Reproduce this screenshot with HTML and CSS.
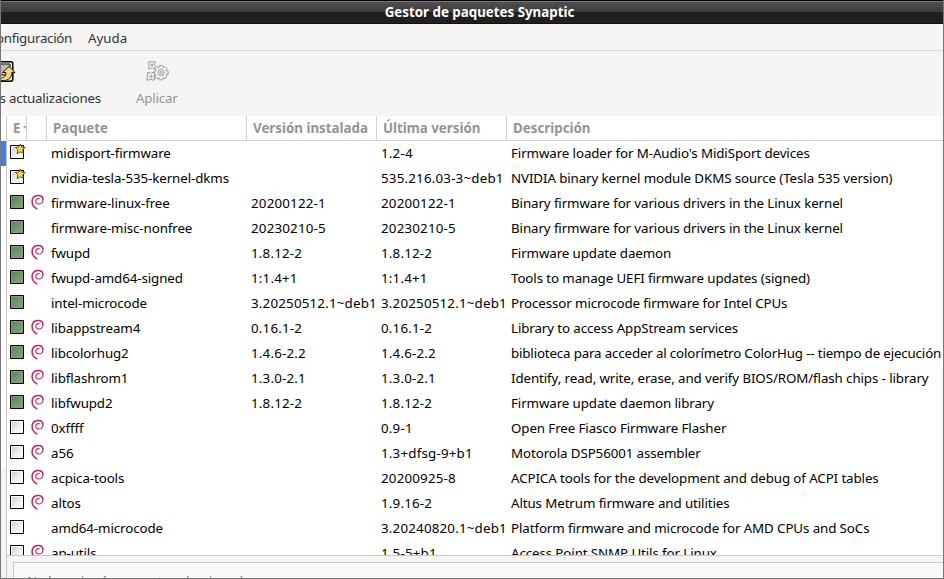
FILE: index.html
```html
<!DOCTYPE html>
<html lang="es">
<head>
<meta charset="utf-8">
<title>Gestor de paquetes Synaptic</title>
<link rel="stylesheet" href="styles.css">
</head>
<body>
<svg class="defs" width="0" height="0">
  <defs>
    <linearGradient id="pale" x1="0" y1="0" x2="1" y2="1"><stop offset="0" stop-color="#cfcfcf"/><stop offset=".6" stop-color="#f0f0f0"/><stop offset="1" stop-color="#fff"/></linearGradient>
    <linearGradient id="moss" x1="0" y1="0" x2="1" y2="1"><stop offset="0" stop-color="#5f835b"/><stop offset="1" stop-color="#84a480"/></linearGradient>
  </defs>
  <symbol id="box" viewBox="0 0 16 16"><path d="M.5 2.5h13v13H.5z" fill="#fff" stroke="#000"/><path d="M2 4h10v10H2z" fill="url(#pale)"/></symbol>
  <symbol id="full" viewBox="0 0 16 16"><path d="M.5 2.5h13v13H.5z" fill="#80a07b" stroke="#000"/><path d="M2 4h10v10H2z" fill="url(#moss)"/></symbol>
  <symbol id="new" viewBox="0 0 16 16"><path d="M.5 2.5h13v13H.5z" fill="#fff" stroke="#000"/><path d="M2 4h10v10H2z" fill="url(#pale)"/><path d="M10.300 1l1.400 3 3.500.4-2.500 2.500.8 3.700-3.200-1.800-3.200 1.800.8-3.700L5.400 4.400l3.500-.4z" fill="#f6d852" stroke="#3b320c" stroke-width=".8"/></symbol>
  <symbol id="swirl" viewBox="0 0 13 16"><g fill="none" stroke="#c4245a" stroke-linecap="round"><path d="M5.800 14.800C2.800 13 .9 10.400 1.100 7.400 1.300 3.900 3.600 1.700 6.600 1.500c2.900-.2 5 1.200 5.300 3.500" stroke-width="1.500"/><path d="M11.900 5c.3 2.800-1.200 4.900-3.700 5C6 10.100 4.600 8.600 4.800 7c.2-1.700 1.600-2.700 3.500-2.200" stroke-width="1.100"/></g></symbol>
</svg>
<div class="window">
  <header class="titlebar">Gestor de paquetes Synaptic</header>
  <nav class="menubar"><span class="cut">Configuración</span><span>Ayuda</span></nav>
  <div class="toolbar">
    <div class="tool upgrade">
      <svg width="24" height="24" viewBox="0 0 24 24"><rect x="2" y="1.800" width="18.800" height="19.400" rx="2" fill="#ececec" stroke="#000" stroke-width="1.500"/><path d="M4 4h14v11H4z" fill="#bdbdbd" stroke="#111"/><path d="M7 17.500c4 1.500 7-1 7-5h-3.500l6.500-6 6.200 6h-3.400c0 6-5 9.500-12 7.500z" fill="#f3d778" stroke="#282006"/></svg>
      <span>Marcar todas las actualizaciones</span>
    </div>
    <div class="tool apply">
      <svg width="24" height="24" viewBox="0 0 24 24"><g fill="#eeeeed" stroke="#9c9c9a" stroke-width="1"><path d="M14.500 5.500h3l.5 2 2-.8 2 2-.8 2 2 .5v3l-2 .5.800 2-2 2-2-.8-.5 2h-3l-.5-2-2 .8-2-2 .8-2-2-.5v-3l2-.5-.8-2 2-2 2 .8z"/><path d="M4 1.500h2l1 1 1-1h2v2l-1 1 1 1v3H8l-1-1-1 1H3.500V6.500l1-1-1-1z"/><path d="M2.500 12.500H5l1 1 1-1h2.500v2.500l-1 1 1 1v3H7l-1-1-1 1H2v-3l1-1-1-1z"/><circle cx="16" cy="12.500" r="3"/><circle cx="16" cy="12.500" r="1"/><circle cx="7" cy="5" r="1"/><circle cx="6" cy="16.500" r="1"/></g></svg>
      <span>Aplicar</span>
    </div>
  </div>
  <main class="content">
    <aside class="filters"><div class="picked"></div><div class="rest"></div></aside>
    <section class="packages">
      <div class="row head"><span class="sort">E<i></i></span><span></span><span>Paquete</span><span>Versión instalada</span><span>Última versión</span><span>Descripción</span></div>
      <div class="list">
        <div class="row"><svg class="state"><use href="#new"/></svg><b></b><span>midisport-firmware</span><span class="ver"></span><span class="ver">1.2-4</span><span>Firmware loader for M-Audio's MidiSport devices</span></div>
        <div class="row"><svg class="state"><use href="#new"/></svg><b></b><span>nvidia-tesla-535-kernel-dkms</span><span class="ver"></span><span class="ver">535.216.03-3~deb1</span><span>NVIDIA binary kernel module DKMS source (Tesla 535 version)</span></div>
        <div class="row"><svg class="state"><use href="#full"/></svg><svg class="deb"><use href="#swirl"/></svg><span>firmware-linux-free</span><span class="ver">20200122-1</span><span class="ver">20200122-1</span><span>Binary firmware for various drivers in the Linux kernel</span></div>
        <div class="row"><svg class="state"><use href="#full"/></svg><b></b><span>firmware-misc-nonfree</span><span class="ver">20230210-5</span><span class="ver">20230210-5</span><span>Binary firmware for various drivers in the Linux kernel</span></div>
        <div class="row"><svg class="state"><use href="#full"/></svg><svg class="deb"><use href="#swirl"/></svg><span>fwupd</span><span class="ver">1.8.12-2</span><span class="ver">1.8.12-2</span><span>Firmware update daemon</span></div>
        <div class="row"><svg class="state"><use href="#full"/></svg><svg class="deb"><use href="#swirl"/></svg><span>fwupd-amd64-signed</span><span class="ver">1:1.4+1</span><span class="ver">1:1.4+1</span><span>Tools to manage UEFI firmware updates (signed)</span></div>
        <div class="row"><svg class="state"><use href="#full"/></svg><b></b><span>intel-microcode</span><span class="ver">3.20250512.1~deb1</span><span class="ver">3.20250512.1~deb1</span><span>Processor microcode firmware for Intel CPUs</span></div>
        <div class="row"><svg class="state"><use href="#full"/></svg><svg class="deb"><use href="#swirl"/></svg><span>libappstream4</span><span class="ver">0.16.1-2</span><span class="ver">0.16.1-2</span><span>Library to access AppStream services</span></div>
        <div class="row"><svg class="state"><use href="#full"/></svg><svg class="deb"><use href="#swirl"/></svg><span>libcolorhug2</span><span class="ver">1.4.6-2.2</span><span class="ver">1.4.6-2.2</span><span class="long">biblioteca para acceder al colorímetro ColorHug -- tiempo de ejecución</span></div>
        <div class="row"><svg class="state"><use href="#full"/></svg><svg class="deb"><use href="#swirl"/></svg><span>libflashrom1</span><span class="ver">1.3.0-2.1</span><span class="ver">1.3.0-2.1</span><span>Identify, read, write, erase, and verify BIOS/ROM/flash chips - library</span></div>
        <div class="row"><svg class="state"><use href="#full"/></svg><svg class="deb"><use href="#swirl"/></svg><span>libfwupd2</span><span class="ver">1.8.12-2</span><span class="ver">1.8.12-2</span><span>Firmware update daemon library</span></div>
        <div class="row"><svg class="state"><use href="#box"/></svg><svg class="deb"><use href="#swirl"/></svg><span>0xffff</span><span class="ver"></span><span class="ver">0.9-1</span><span>Open Free Fiasco Firmware Flasher</span></div>
        <div class="row"><svg class="state"><use href="#box"/></svg><svg class="deb"><use href="#swirl"/></svg><span>a56</span><span class="ver"></span><span class="ver">1.3+dfsg-9+b1</span><span>Motorola DSP56001 assembler</span></div>
        <div class="row"><svg class="state"><use href="#box"/></svg><svg class="deb"><use href="#swirl"/></svg><span>acpica-tools</span><span class="ver"></span><span class="ver">20200925-8</span><span>ACPICA tools for the development and debug of ACPI tables</span></div>
        <div class="row"><svg class="state"><use href="#box"/></svg><svg class="deb"><use href="#swirl"/></svg><span>altos</span><span class="ver"></span><span class="ver">1.9.16-2</span><span>Altus Metrum firmware and utilities</span></div>
        <div class="row"><svg class="state"><use href="#box"/></svg><b></b><span>amd64-microcode</span><span class="ver"></span><span class="ver">3.20240820.1~deb1</span><span>Platform firmware and microcode for AMD CPUs and SoCs</span></div>
        <div class="row"><svg class="state"><use href="#box"/></svg><svg class="deb"><use href="#swirl"/></svg><span>ap-utils</span><span class="ver"></span><span class="ver">1.5-5+b1</span><span>Access Point SNMP Utils for Linux</span></div>
      </div>
      <div class="details"><div class="note">No hay ningún paquete seleccionado.</div></div>
    </section>
  </main>
</div>
</body>
</html>
```

FILE: styles.css
```css
* { box-sizing: border-box; }
body { margin: 0; font: 13.333px/18px "Noto Sans", sans-serif; color: #000; background: #f6f5f4; }
.defs { position: absolute; }
.window { width: 944px; height: 579px; display: flex; flex-direction: column; overflow: hidden; border: solid #777; border-width: 0 1px 1px; }
.titlebar { flex: none; height: 24px; margin: 0 -1px; padding: 2px 0 0 15px; text-align: center; font-weight: 700; color: #fff; border-top: 1px solid #000; border-bottom: 1px solid #111; background: linear-gradient(#777 0 1px, #505050 1px, #3b3b3b 11px, #202020 11px); }
.menubar { flex: none; height: 27px; display: flex; gap: 16px; padding-top: 5px; color: #2e3436; border-bottom: 1px solid #dcdad8; }
.cut { width: 71px; display: flex; justify-content: flex-end; white-space: nowrap; letter-spacing: -.3px; }
.toolbar { flex: none; height: 65px; display: flex; color: #2e3436; letter-spacing: -.2px; }
.tool { display: flex; flex-direction: column; padding-top: 9px; gap: 5px; white-space: nowrap; }
.upgrade { width: 100px; align-items: flex-end; }
.upgrade svg { margin-right: 85px; }
.apply { margin-left: 35px; align-items: center; color: #929595; }
.content { flex: 1; min-height: 0; display: flex; }
.filters { flex: none; width: 5px; padding-top: 25px; background: #fff; display: flex; flex-direction: column; }
.picked { height: 25px; background: #3584e4; }
.rest { margin-top: 302px; flex: 1; background: #f6f5f4; }
.packages { flex: 1; min-width: 0; display: flex; flex-direction: column; border-left: 1px solid #cdc7c2; }
.row { display: grid; grid-template-columns: 20px 20px 200px 130px 130px 1fr; height: 25px; letter-spacing: -.1px; }
.row > span { overflow: hidden; white-space: nowrap; padding-top: 3px; margin: 0 1px 0 4px; }
.row > .ver { letter-spacing: .2px; }
.row > .long { letter-spacing: -.16px; }
.row > span:last-child { margin-right: 0; }
.head { flex: none; font-weight: 700; letter-spacing: 0; color: #929595; background: #fff; border-bottom: 1px solid #d5d0cc; }
.head > span { margin: 0; padding-left: 6px; border-right: 1px solid #d5d0cc; }
.head > span:last-child { border-right: 0; }
.head .sort { display: flex; }
.sort i { flex: none; margin: 7px 0 0 3px; border: solid transparent; border-width: 4px 4px 0; border-top-color: #929595; height: 0; }
.list { flex: none; height: 414px; overflow: hidden; background: #fff; }
.state { width: 16px; height: 16px; margin: 2px 0 0 3px; }
.deb { width: 13px; height: 16px; margin: 3px 0 0 4px; }
.details { flex: 1; min-height: 0; padding: 6px 0 0 6px; border-top: 1px solid #cdc7c2; }
.note { height: 30px; overflow: hidden; padding: 9px 13px 0; letter-spacing: -.25px; color: #7c7f80; background: #faf9f8; border: solid #cdc7c2; border-width: 1px 0 0 1px; }
```
